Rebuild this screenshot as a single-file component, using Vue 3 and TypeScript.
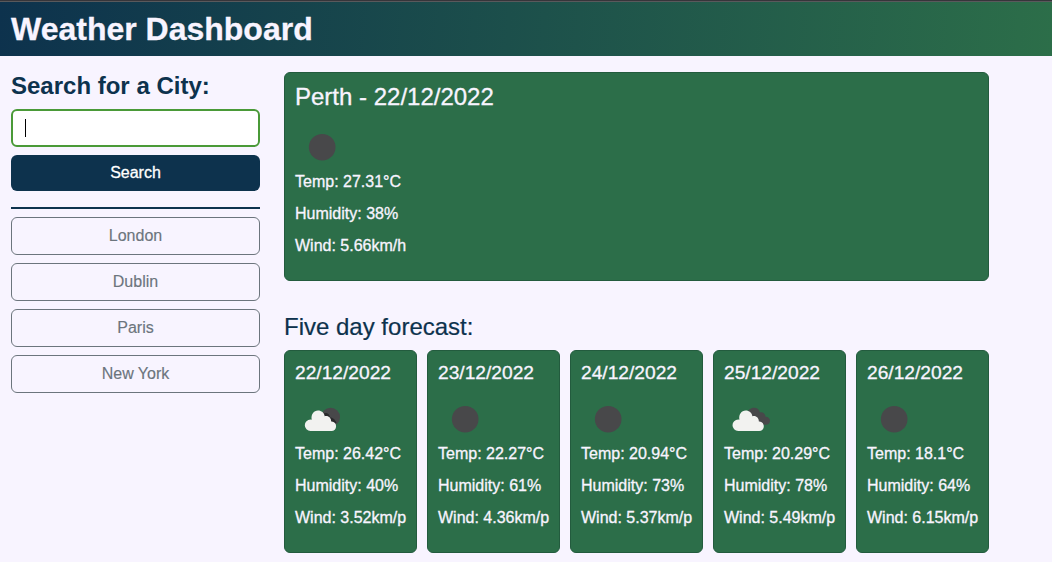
<script setup lang="ts">
import { ref } from 'vue'

type Icon = 'clear' | 'few' | 'broken'
interface Forecast {
  date: string
  icon: Icon
  temp: string
  humidity: number
  wind: string
}

const city = ref('')
const history = ['London', 'Dublin', 'Paris', 'New York']
const days: Forecast[] = [
  { date: '22/12/2022', icon: 'few', temp: '26.42', humidity: 40, wind: '3.52' },
  { date: '23/12/2022', icon: 'clear', temp: '22.27', humidity: 61, wind: '4.36' },
  { date: '24/12/2022', icon: 'clear', temp: '20.94', humidity: 73, wind: '5.37' },
  { date: '25/12/2022', icon: 'broken', temp: '20.29', humidity: 78, wind: '5.49' },
  { date: '26/12/2022', icon: 'clear', temp: '18.1', humidity: 64, wind: '6.15' },
]
</script>

<template>
  <div class="page">
    <header class="header"><h1>Weather Dashboard</h1></header>
    <div class="layout">
      <aside class="sidebar">
        <h2>Search for a City:</h2>
        <label class="field">
          <span class="caret"></span>
          <input v-model="city" type="text" aria-label="City" />
        </label>
        <button class="search" type="button">Search</button>
        <hr />
        <div class="history">
          <button v-for="name in history" :key="name" type="button">{{ name }}</button>
        </div>
      </aside>
      <main>
        <section class="card today">
          <h3>Perth - 22/12/2022</h3>
          <svg class="icon" viewBox="0 0 50 50"><circle cx="27.2" cy="25.2" r="13.3" fill="#48484a" /></svg>
          <p>Temp: 27.31°C</p>
          <p>Humidity: 38%</p>
          <p>Wind: 5.66km/h</p>
        </section>
        <h3 class="forecast-title">Five day forecast:</h3>
        <div class="forecast">
          <section v-for="day in days" :key="day.date" class="card day">
            <h4>{{ day.date }}</h4>
            <svg class="icon" viewBox="0 0 50 50">
              <circle v-if="day.icon === 'clear'" cx="27.2" cy="25.2" r="13.3" fill="#48484a" />
              <template v-else-if="day.icon === 'few'">
                <circle cx="35.6" cy="23.2" r="9.4" fill="#48484a" />
                <path
                  d="M28 20C31 17.8 35 20 34.8 23.5C38.5 23.5 40 26 41.5 28.5L36 34H25Z"
                  fill="#29292b"
                />
                <path
                  d="M15.5 37A5.7 5.7 0 0 1 15.5 25.6L16.7 25.7C15.8 20.5 18.7 16.5 23 16.5C26.5 16.5 29.2 18.8 29.7 22.2C33.3 21.2 36.2 23.8 36.2 27.6C39.2 27.3 41.1 29.6 41.1 32.2C41.1 35 39.1 37 36.5 37Z"
                  fill="#f2f2f0"
                />
              </template>
              <template v-else>
                <path
                  d="M23 20C24 16 26.5 13.8 30 13.8C33.3 13.8 35.4 15.8 35.9 18.3C39.2 17.9 41.4 20 41.5 22.7C44.2 22.6 46 24.4 46 26.7C46 29.2 44 30.7 41.7 30.7H28Z"
                  fill="#48484a"
                />
                <path
                  transform="translate(-1.3 0)"
                  d="M15.5 37A5.7 5.7 0 0 1 15.5 25.6L16.7 25.7C15.8 20.5 18.7 16.5 23 16.5C26.5 16.5 29.2 18.8 29.7 22.2C33.3 21.2 36.2 23.8 36.2 27.6C39.2 27.3 41.1 29.6 41.1 32.2C41.1 35 39.1 37 36.5 37Z"
                  fill="#f2f2f0"
                />
              </template>
            </svg>
            <p>Temp: {{ day.temp }}°C</p>
            <p>Humidity: {{ day.humidity }}%</p>
            <p>Wind: {{ day.wind }}km/p</p>
          </section>
        </div>
      </main>
    </div>
  </div>
</template>

<style>
body {
  margin: 0;
  background: #f8f4ff;
  overflow: hidden;
}
</style>

<style scoped>
* {
  box-sizing: border-box;
}
.page {
  height: 562px;
  overflow: hidden;
  background: #f8f4ff;
  color: #0d324d;
  font: 16px/24px "Liberation Sans", Arial, sans-serif;
}
.header {
  height: 56px;
  padding: 9px 11px 0;
  border-top: 1px solid #36353a;
  box-shadow: inset 0 1px #59595c;
  background: linear-gradient(95deg, #0d324d, #2c6e49);
  color: #f8f4ff;
}
h1, h2, h3, h4, p {
  margin: 0;
}
h1 {
  font-size: 32px;
  line-height: 38px;
  -webkit-text-stroke: 0.3px;
}
.layout {
  display: flex;
  gap: 24px;
  padding: 16px 0 0 11px;
}
.sidebar {
  width: 249px;
}
h2 {
  margin-bottom: 10px;
  font-size: 24px;
  line-height: 27px;
}
.field {
  display: flex;
  align-items: center;
  height: 38px;
  padding: 0 12px;
  border: 2px solid #4a9a38;
  border-radius: 6px;
  background: #fff;
}
.caret {
  width: 1px;
  height: 18px;
  background: #000;
}
input {
  flex: 1;
  min-width: 0;
  padding: 0;
  border: 0;
  outline: 0;
  background: transparent;
  font: inherit;
}
button {
  display: block;
  width: 100%;
  padding: 0;
  border-radius: 6px;
  font: inherit;
}
.search {
  height: 36px;
  margin-top: 8px;
  border: 0;
  background: #0d324d;
  color: #fff;
  -webkit-text-stroke: 0.3px;
}
hr {
  height: 2px;
  margin: 16px 0 8px;
  border: 0;
  background: #0d324d;
}
.history {
  display: grid;
  gap: 8px;
}
.history button {
  height: 38px;
  border: 1px solid #6c757d;
  background: transparent;
  color: #6c757d;
  -webkit-text-stroke: 0.15px;
}
main {
  width: 705px;
}
.card {
  padding: 10px;
  border: 1px solid #235b3e;
  border-radius: 6px;
  background: #2c6e49;
  color: #f8f4ff;
  -webkit-text-stroke: 0.3px;
}
.today {
  height: 209px;
}
h3 {
  font-size: 24px;
  font-weight: 400;
  line-height: 27px;
}
.icon {
  display: block;
  width: 50px;
  height: 50px;
}
.today .icon {
  margin-top: 12px;
}
.card p {
  margin-bottom: 8px;
  white-space: nowrap;
}
.today p:first-of-type {
  margin-top: -2px;
}
.forecast-title {
  margin: 32px 0 10px;
  -webkit-text-stroke: 0.2px;
}
.forecast {
  display: grid;
  grid-template-columns: repeat(5, 133px);
  gap: 10px;
}
.day {
  height: 203px;
}
h4 {
  font-size: 19.2px;
  font-weight: 400;
  line-height: 23px;
}
.day .icon {
  margin: 10px 0 -2px;
}
</style>
